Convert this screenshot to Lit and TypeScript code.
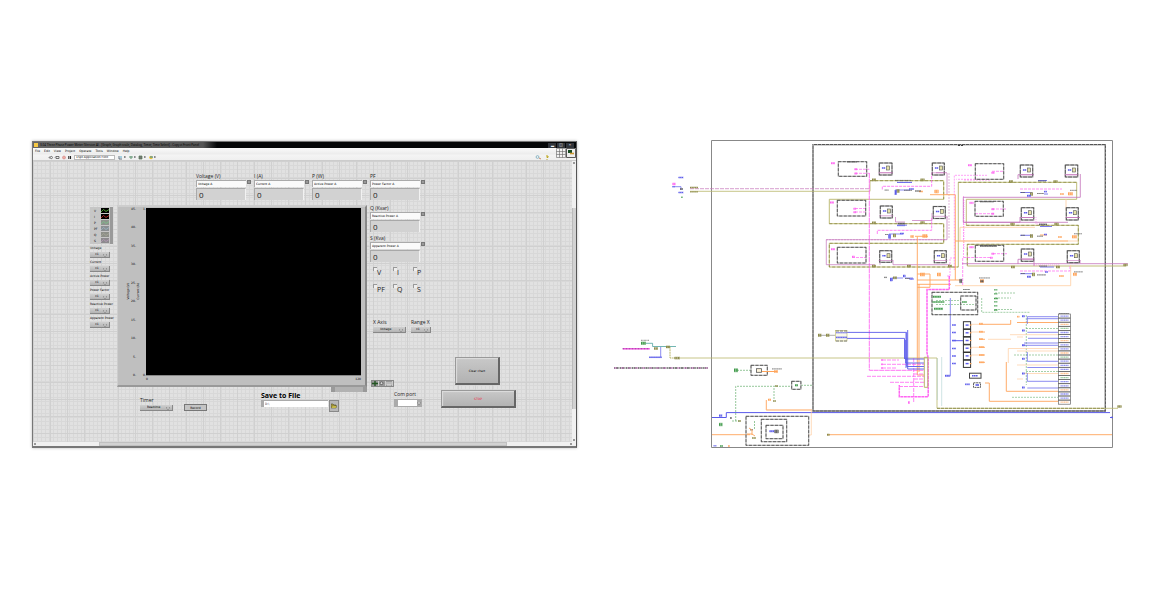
import { LitElement, html, svg, css } from "lit";
import { customElement, property } from "lit/decorators.js";

type Wire = { c: string; p: string; w?: number; d?: string; o?: number };
type Box = [number, number, number, number];

const BLACK = "#3c3c3c";
const OLIVE = "#b9b66a";
const PINK = "#ff66f2";
const PLUM = "#c472ba";
const ORANGE = "#ffa45a";
const PEACH = "#ffcda0";
const BLUE = "#5a5aea";
const GREEN = "#68b070";

const WIRES: Wire[] = [
  // loop borders
  { c: "#888", p: "M711.5 140.5H1112.5V447.5H711.5Z" },
  { c: "#555", p: "M813 144.7H1105.3V411H813Z", w: 1.3 },
  { c: "#ccc", p: "M813 144.7H1105.3V411H813Z", w: 0.8, d: "1 3" },
  { c: BLACK, p: "M958 145.5H964", w: 1.2, d: "2 1" },
  // input wires on the left
  { c: PLUM, p: "M690 188.7H870", w: 0.7, d: "4 1" },
  { c: OLIVE, p: "M690 191.3H870V180.7", w: 0.8 },
  { c: OLIVE, p: "M680 358H937V408.3H1118", w: 0.8 },
  { c: "#77762c", p: "M937 408.3H1105", w: 0.7, d: "3 1" },
  // left bank of measurements
  { c: OLIVE, p: "M870 180.7H943.7V199.3H829.3V223.7H943.7V243.3H829.3V267H958.3V182.3H1076.7V199.3H966.3V225.3H1078.3V244.3H967.3V266H1126", w: 0.9 },
  { c: "#77762c", p: "M870 180.7H943.7V199.3M829.3 223.7H943.7V243.3H829.3V267H958.3M958.3 182.3H1076.7M966.3 225.3H1078.3V244.3H967.3V266", w: 0.6, d: "3 2" },
  { c: PINK, p: "M869.3 173V370.3H924", w: 0.9, d: "5 .6" },
  { c: PINK, p: "M855 169.3H869.3M855 173.3H869.3M855 208.5H866M855 212H866M852 257.5H866", w: 0.7, d: "3 1" },
  { c: PLUM, p: "M947 173V195M947 217V239.7H826.3V264.7H875M880 172.7H893M936 172.7H947M893 260V264.7H950M880 260V264.7M895.5 217V222H905M912 220.5H932V213M945 217H948", w: 0.7 },
  { c: PLUM, p: "M949 173V239M826 239.7H945", w: 0.5, d: "2 1" },
  { c: PINK, p: "M882.3 189.5V186.3H931.7V173M877.3 234V230.3H931.7V218", w: 0.8, d: "3 1" },
  { c: BLUE, p: "M897 182.5H912M897 225.7H905M895 195V190H910M889 238V234H903M892 281V278H903M905 278L913 278", w: 0.7 },
  { c: ORANGE, p: "M930 194.7H955.3V280M917.3 236.5V375H924M919 284V372M928 236.3H915M917 280H960M917 284.3H951M917.3 274H930V287.3H917.3", w: 0.9 },
  // right bank of measurements
  { c: PINK, p: "M987 175.3H954.3V270M987 179.3H956.3M990 180H963M963.5 196V257M955 258H950V276H947", w: 0.6, d: "2 1" },
  { c: PINK, p: "M992 171.3H1004M992 209H1006M975 213.7H994M993 253.7H1007M962.7 285V257.5H991M1020 189H1062M1020 271H1070V265", w: 0.7, d: "3 1" },
  { c: PLUM, p: "M1080.3 174V197.3H963.3V222.3H1020V217M963.3 222.3H1068M1018 179V174.7H1034M1066 174.7H1078M1020 217.5H1034M1066 217.5H1080M1080 260V263.3M1018 264V259.3H1034V266M962 263.7H1128", w: 0.8 },
  { c: PINK, p: "M964 200V250M1036 217V224H1045M1034 265H1060", w: 0.5, d: "1 1" },
  { c: ORANGE, p: "M955 241H1068M1040 235H1047", w: 0.9 },
  { c: PEACH, p: "M1035 227.3H960V241M963.7 243V241M1066 199V210M1070.7 265V285.7H955M1078.3 241H1060", w: 0.8 },
  { c: BLUE, p: "M1020 192.5H1032M1044 194H1048M1020 235.3H1032M1020 273.7H1032M1038 180.5H1047M1040 267H1054M1040 226.5H1052", w: 0.8 },
  // cluster building in the centre
  { c: PINK, p: "M949.3 276V289.5H927V353L928.2 358V396.7H899.3V385", w: 1.5, d: "3 .5" },
  { c: PINK, p: "M882 360H899M882 364.3H924M882 368H897M867 376.3H924M890 382.3H924M899 386.5H924M913.7 358V402M914 374H924M914 379H924", w: 0.8, d: "4 1" },
  { c: BLUE, p: "M846 332.4H906.7V366.5H924M846 338.4H904.5V359M906 333V368M907.7 330V369H924M905 359H924M905.7 340V363H924", w: 0.9 },
  { c: "#888", p: "M819 335.3H835", w: 0.7 },
  { c: OLIVE, p: "M924.3 357.3H927.8V387.3H924.3Z", w: 1 },
  { c: BLUE, p: "M950.3 298V376.3", w: 0.7 },
  { c: "#9fc8c8", p: "M941.7 357V406M937.3 358V400", w: 0.5 },
  // lower wires
  { c: BLUE, p: "M712 417.5H726.3V412.6H1110M952 340.7H963M1110 417.5H1113", w: 1 },
  { c: ORANGE, p: "M712 434.7H750M828 434.7H1112M766.3 400V410H812", w: 0.9 },
  { c: PEACH, p: "M811.3 411V435H808M766 410H812", w: 0.7 },
  { c: GREEN, p: "M737 370.3H751M735.7 421V386.3H791M801 385.3H813M774 388V400M732 421H741M754.5 421V430", w: 0.7, d: "2 1" },
  { c: "#4fa39e", p: "M646 343.3H652.6V346.5H676", w: 0.8 },
  { c: BLUE, p: "M660.7 347V357.3H649M673 186.7H681V190", w: 0.7 },
  { c: OLIVE, p: "M667 347H670V358H675", w: 1, d: "2 .6" },
  { c: PINK, p: "M623 348.8H650", w: 1.4 },
  // graph routing on the right
  { c: GREEN, p: "M981.7 298V312.3H1029.7M1026.3 315V385M936 304.5H975M936 300.5H960M995 293H1015M995 298H1011M995 309.5H1012M1026 328.5H1058M1026 371.5H1058M1012 397.3H1058M1014 355H1058", w: 0.6, d: "2 1" },
  { c: ORANGE, p: "M979 324.3H1010.7V320M979 332H985M979 339.3H985M979 347.3H985M979 355H985M979 362.3H985M1017 322.5H1058M1006.3 362V391.3H1058M985 383H989.3V401.3H1058", w: 0.9 },
  { c: PEACH, p: "M1010 334.7H1058M1008.3 363V348.5H1058M1017 351H1058M1017 365H1058M1017 379H1023M1017 337H1023M988 339.3H1011M1024 373.5H1058M970.7 324.3H979M970.7 332H979M970.7 347.3H979M970.7 355H979", w: 0.7 },
  { c: BLUE, p: "M1027.3 324V316.7H1058M1027.3 318.7H1058M1027.3 332.3H1058M1028 338.3H1058M1023 345.3H1058M1024 343H1058M1027.3 352V361.3H1058M1027.3 373V381.3H1058M1027.3 367.5H1058M1027.3 388H1058", w: 0.7 },
];

const CASES: Box[] = [
  [838.3, 161.7, 28.4, 14.6], [837.3, 200.3, 28.4, 15.7], [837.3, 247.3, 28.7, 15.7],
  [975.3, 163.7, 28.4, 15.6], [975, 201.3, 28.3, 15], [975.3, 245.3, 28.4, 16],
  [932, 292.3, 45.7, 22.4], [960.7, 296, 15.3, 14],
  [746, 416.3, 62.7, 29], [761.3, 419.3, 25.4, 22.4], [766, 425.3, 17, 13.4],
  [751, 365.3, 16.3, 10], [791.7, 381.3, 9.2, 8],
];

const NODES: Box[] = [
  [879.3, 163, 12.7, 12], [932.3, 163, 12, 12], [880.3, 206, 12, 12], [933.3, 206.5, 12, 12],
  [879.7, 250.7, 12, 11.6], [934.3, 250.7, 12, 12], [1020.3, 165, 12.4, 12], [1065.3, 165, 12.4, 12],
  [1021.3, 207.7, 12.4, 12.3], [1066.3, 207.7, 12, 12.3], [1021.3, 249, 12.4, 12.3], [1067.3, 250.7, 12, 12],
];

// small terminals: colour, then x, y, w, h
const TERMS: [string, Box[]][] = [
  ["#8d8b4a", [
    [872, 178.3, 4, 3], [920.5, 178.3, 4, 3], [872, 221.3, 4, 3], [920.5, 221, 4, 3], [872, 264.6, 4, 3], [907, 264.6, 4, 3], [948, 264.6, 4, 3],
    [1009, 180, 4, 3], [1053.5, 180, 4, 3], [1010.5, 222.5, 4, 3], [1054.5, 222.5, 4, 3], [1011, 265.5, 4, 3], [1056, 265.5, 4, 3],
    [1123.5, 263.4, 4, 3], [1117.5, 405, 4, 3], [690, 186.5, 8, 2], [690, 191, 8, 1.6], [666, 345.4, 4, 3], [654, 347, 4, 3], [674.5, 356.6, 5.5, 3],
    [818, 333.5, 3.5, 3.5], [826, 333.5, 3.5, 3.5], [896.5, 189, 3, 4], [893, 233.5, 3, 4], [893, 276.3, 4, 3],
    [1030, 192, 3, 4], [1030, 234, 3, 4], [1032, 272.4, 3, 4], [773, 400, 3, 2], [775, 385, 3, 2], [738, 420, 3, 2], [827, 433.5, 2.5, 2.5], [752, 437, 4, 2],
  ]],
  [PINK, [
    [831, 162, 4, 2.4], [830, 201.3, 4, 2.4], [831, 248, 4, 2.4], [968, 164, 4, 2.4], [969.5, 201.7, 4, 2.4], [969.5, 246, 4, 2.4],
    [854.5, 168, 2.6, 2.4], [854.5, 172.3, 2.6, 2.4], [853.5, 207.5, 2.6, 2.4], [853.5, 211, 2.6, 2.4], [852, 255.5, 2.6, 2.4],
    [991.5, 171.5, 3, 2.4], [991.5, 208, 2.6, 2.4], [991.5, 212.5, 2.6, 2.4], [991.5, 252.5, 2.6, 2.4], [990, 256.6, 2.6, 2.4],
    [881, 359, 2, 2], [881, 363.3, 2, 2], [881, 367, 2, 2], [908, 401, 2, 3], [672.5, 182.5, 3, 3],
  ]],
  [ORANGE, [
    [934.5, 189.5, 4, 4], [919, 190.5, 4, 2], [922.5, 234, 5, 4], [910.5, 235, 3.5, 3], [937, 272.5, 4, 4], [920, 272.5, 5, 4],
    [1068, 192, 5, 3.6], [1060, 193, 4, 2], [1072, 235, 5, 3.6], [1058, 236, 4, 2], [1073, 272.5, 4, 3.6], [1059, 275, 5, 2],
    [980, 279, 4, 4], [979, 322.7, 4, 2], [979, 330.7, 4, 2], [979, 338, 4, 2], [979, 346, 5, 2], [979, 354, 5, 2], [979, 361.3, 5, 2],
    [768, 398.4, 3, 2.6], [774, 370, 4, 3], [728, 445, 2, 2], [1017, 315.7, 2.4, 2],
  ]],
  [BLUE, [
    [678.5, 176.5, 5, 2], [678.5, 191.5, 5, 2], [672, 186, 3, 1.4], [649, 356.5, 13, 1.6], [836, 332, 11, 1.4], [836, 336.4, 11, 2],
    [895, 190, 2, 5], [909, 188, 5, 2], [888.5, 234, 2.4, 5], [900, 232.5, 4, 2], [890, 277.5, 2.4, 4], [903, 274.5, 2.4, 3], [909.5, 278, 4, 2],
    [1027, 194.5, 4, 2.4], [1044, 190.6, 3, 2], [1044, 233.5, 3, 2], [1027, 275.5, 4, 2.4], [1045, 271, 3, 2], [897, 181.8, 15, 1], [897, 224.5, 10, 1.4],
    [952, 324, 4, 2], [952, 331.5, 4, 2], [952, 339.5, 4, 2], [952, 347.5, 4, 2], [952, 355, 4, 2], [952, 362.5, 4, 2], [945, 374.6, 5, 2.4], [965, 383.3, 5, 2],
    [1022, 315, 2.6, 2.4], [1022, 329.3, 2.6, 2.4], [1022, 344, 2.6, 2.4], [1022, 357.6, 2.6, 2.4], [1022, 372.3, 2.6, 2.4], [1022, 386.3, 2.6, 2.4],
    [719, 414.3, 3.4, 2.6], [713.5, 445, 3, 1.6], [1111, 416.6, 2, 1.6], [769.5, 430, 5, 2.4],
  ]],
  ["#3f9a4a", [
    [734, 368.3, 4, 4], [719, 422.7, 3.6, 3.6], [720, 445, 3, 2], [795, 384, 3, 2.6], [681, 196.5, 2, 1.6], [933, 295.5, 8, 2.4], [932.5, 301, 12, 2], [934, 307.5, 9, 2.6],
    [994, 289, 3.5, 1.6], [994, 293, 3.5, 1.6], [994, 297.5, 4, 2], [994, 301, 3.5, 1.6], [994, 305, 3.5, 1.6], [994, 309, 3.5, 2], [962, 301, 5, 2],
    [641, 341.5, 5, 3.4],
  ]],
  ["#555", [
    [847, 161, 10, 1.6], [895, 180, 16, 0.8], [898, 222.6, 7, 2], [884.6, 189.6, 4, 1], [885, 234, 3, 1], [884, 276.7, 3, 1.4], [904, 189.8, 8, 1], [905, 278, 5, 1],
    [1038, 180.5, 8, 1], [1039, 223.4, 8, 2], [1039, 265.6, 8, 1], [1021, 192, 4, 1], [1021, 234.8, 4, 1], [1021, 273, 4, 1], [1037, 193, 7, 1], [1037, 235.7, 6, 1], [1037, 274.4, 9, 1],
    [980, 201, 14, 1.4], [980, 245, 17, 2], [959.5, 278.8, 2.6, 4.4], [980.5, 280, 3, 2.6], [680, 188, 3, 2], [963, 289, 7, 1], [730, 417, 2, 2], [750, 429, 3, 1.5], [774.5, 429.4, 4, 4],
    [1059, 313, 10, 1], [772, 368.5, 10, 0.8], [915, 190.2, 6, 1.6], [979, 277.6, 11, 0.7], [1070, 190, 7, 0.7], [1074, 233.4, 8, 0.7], [1074, 271.5, 9, 0.7],
  ]],
];

const COLUMN = Array.from({ length: 6 }, (_, i) => 321.7 + i * 7.7);
const STACK = Array.from({ length: 22 }, (_, i) => 314 + i * 4.1);
const STACK_INK = [BLUE, BLUE, ORANGE, GREEN, BLUE, BLUE, ORANGE, BLUE, BLUE, ORANGE, GREEN, BLUE];

@customElement("block-diagram")
export class BlockDiagram extends LitElement {
  static styles = css`
    :host { display: block; min-width: 0; }
    svg { display: block; width: 100%; height: auto; }
  `;
  render() {
    return html`<svg viewBox="614 140 514 308" role="img" aria-label="Block diagram" fill="none">
      ${WIRES.map((l) => svg`<path d=${l.p} stroke=${l.c} stroke-width=${l.w ?? 1} stroke-dasharray=${l.d ?? "none"} />`)}
      ${CASES.map(([x, y, w, h]) => svg`
        <rect x=${x} y=${y} width=${w} height=${h} stroke="#aaa" stroke-width="1" />
        <rect x=${x} y=${y} width=${w} height=${h} stroke="#333" stroke-width=".7" stroke-dasharray="3 1.5" />`)}
      ${NODES.map(([x, y, w, h]) => svg`
        <rect x=${x} y=${y} width=${w} height=${h} stroke="#aaa" stroke-width="1.3" />
        <rect x=${x} y=${y} width=${w} height=${h} stroke="#333" stroke-width=".7" stroke-dasharray="4 1" />
        <path d="M${x + 2.6} ${y + 5}h3.6" stroke=${BLUE} stroke-width="1.6" stroke-dasharray="1.4 .3" />
        <rect x=${x + 7.3} y=${y + 3} width="3" height="4" fill="#e6e2a8" stroke="#555" stroke-width=".6" />
        <path d="M${x - 1} ${y + 9.8}h${w + 2}" stroke=${PLUM} stroke-width=".6" />`)}
      <rect x="835.5" y="330.5" width="11.5" height="10.5" fill="#fbfae8" stroke=${OLIVE} stroke-width=".6" />
      <path d="M836 331h11M836 341h11" stroke="#666" stroke-width=".8" stroke-dasharray="3 1" />
      ${TERMS.map(([c, list]) => list.map(([x, y, w, h]) => svg`
        <path d="M${x} ${y + h / 2}h${w}" stroke=${c} stroke-width=${h} opacity=".45" />
        <path d="M${x} ${y + h / 2}h${w}" stroke=${c} stroke-width=${Math.max(h - 1, 0.5)} stroke-dasharray="1.1 .6" />`))}
      ${COLUMN.map((y) => svg`
        <rect x="963.4" y=${y} width="7.2" height="7.2" stroke="#333" stroke-width="1" />
        <path d=${`M965.6 ${y + 3.4}h3`} stroke=${BLUE} stroke-width="1.4" />
        <path d=${`M969.8 ${y + 3.4}h1.6`} stroke=${ORANGE} stroke-width="1.2" />`)}
      ${STACK.map((y, i) => svg`
        <rect x="1058.5" y=${y} width="12" height="4.1" stroke="#666" stroke-width=".7" />
        <path d=${`M1060.5 ${y + 2.1}h8`} stroke=${STACK_INK[i % 12]} stroke-width="1.3" stroke-dasharray="1.3 .4" opacity=".7" />`)}
      <rect x="969.5" y="373.2" width="11.5" height="5" stroke="#444" stroke-width="1" />
      <path d="M972 375.8h6" stroke=${BLUE} stroke-width="1.6" stroke-dasharray="1.4 .4" />
      <rect x="973.5" y="382.8" width="7" height="4.6" stroke="#333" stroke-width=".8" stroke-dasharray="2 .6" />
      <path d="M975.5 385h3.5" stroke=${BLUE} stroke-width="1.6" />
      <path d="M749 428l3 2v5M747 434h5l3 2" stroke=${ORANGE} stroke-width=".9" />
      <rect x="756.5" y="368.7" width="5" height="3.6" fill="#fff6dd" stroke="#555" stroke-width=".8" />
      <path d="M762 371.5h15" stroke=${ORANGE} />
      <path d="M614 368h94" stroke="#555" stroke-width="1.6" stroke-dasharray="1.4 .5 2.2 .4 .8 .6" />
      <path d="M614 368h94" stroke=${PINK} stroke-width=".5" stroke-dasharray="3 4" />
      <path d="M622.5 348.8h27" stroke="#a0309a" stroke-width="1" stroke-dasharray="2 1" />
      <path d="M641 340.3h8" stroke="#555" stroke-width=".7" stroke-dasharray="1 .4" />
    </svg>`;
  }
}

@customElement("numeric-meter")
export class NumericMeter extends LitElement {
  @property() caption = "";
  @property() source = "";
  static styles = css`
    :host { display: block; font-family: "Open Sans", "Noto Sans", sans-serif; color: #222; }
    .caption { display: block; font-size: 5px; line-height: 7px; height: 7px; white-space: nowrap; }
    .row { display: flex; gap: 1px; align-items: flex-start; }
    .source { width: 50px; height: 7px; box-sizing: border-box; border: 0 solid #aaa; border-top-width: 1px; border-left-width: 1px; background: #fafafa; padding: 0 1px; margin: 0; font: 3px/6px "DejaVu Sans", sans-serif; color: #000; appearance: none; border-radius: 0; outline: none; }
    .spin { width: 4px; height: 4px; padding: 0; border: 1px solid #777; background: #999; box-sizing: border-box; }
    .value { display: block; width: 50px; height: 12px; box-sizing: border-box; padding: 1px 2px; font-size: 8px; line-height: 10px; color: #222; background: #d2d2d2; border-top: 1px solid #a8a8a8; border-left: 1px solid #aaa; border-right: 1px solid #f2f2f2; margin-top: 1px; }
  `;
  render() {
    return html`<label class="caption" for="src">${this.caption}</label>
      <div class="row"><select class="source" id="src"><option>${this.source}</option></select><button class="spin" aria-label="Next ${this.caption}"></button></div>
      <output class="value" for="src">0</output>`;
  }
}

const MENUS = ["File", "Edit", "View", "Project", "Operate", "Tools", "Window", "Help"];
const TRACES: [string, string, string][] = [
  ["V", "#000", "#6d4"], ["I", "#000", "#e33"], ["P", "#8d938d", "#7c8"],
  ["PF", "#8b8f92", "#9bc"], ["Q", "#8c8f88", "#aa9"], ["S", "#8c8a8e", "#b9b"],
];
const SCALES = ["Voltage", "Current", "Active Power", "Power Factor", "Reactive Power", "Apparent Power"];
const TICKS = [45, 40, 35, 30, 25, 20, 15, 10, 5, 0];

@customElement("app-root")
export class AppRoot extends LitElement {
  static styles = css`
    :host { display: block; min-height: 100vh; box-sizing: border-box; background: #fff; padding: 140px 39px 0 32px; font-family: "Open Sans", "Noto Sans", sans-serif; color: #222; }
    .page { display: grid; grid-template-columns: 545fr 514fr; gap: 37px; align-items: start; }
    .window { margin-top: 1px; border: 1px solid #777; border-right-color: #555; border-bottom: 2px solid #777; box-shadow: 0 0 3px #bbb; box-sizing: border-box; background: #e9e9e9; min-width: 0; }
    .title { display: flex; align-items: center; height: 6px; background: linear-gradient(90deg, #666 0, #555 170px, #050708 184px, #050708); font-size: 3px; line-height: 6px; white-space: nowrap; }
    .logo { width: 4px; height: 4px; margin: 0 2px 0 1px; background: #f6c945; }
    .name { flex: 1; font: normal 3px/6px "Noto Sans", sans-serif; margin: 0; color: #000; }
    .winbtn { display: flex; gap: 1px; padding-right: 2px; }
    .winbtn button { width: 8px; height: 5px; border: 0; background: #30343a; color: #eee; font-size: 4px; line-height: 4px; padding: 0; }
    .chrome { display: flex; height: 13px; background: linear-gradient(#fbfbfb, #ececec 6px, #f4f4f4 7px, #efefef); border-bottom: 1px solid #ccc; box-sizing: border-box; }
    .bars { flex: 1; }
    .menu { display: flex; gap: 4px; padding-left: 2px; height: 6px; font: 3px/6px "DejaVu Sans", sans-serif; }
    .menu a { color: #000; text-decoration: none; }
    .tools { display: flex; align-items: center; height: 6px; padding: 0 6px 0 15px; gap: 2px; }
    .tools svg { height: 5px; display: block; }
    .tools select { width: 41px; height: 5px; border: 1px solid #bbb; background: #fff; font: 3px/3px "DejaVu Sans", sans-serif; padding: 0 1px; appearance: none; color: #000; box-sizing: border-box; }
    .push { flex: 1; }
    .conn { width: 20px; height: 10px; display: block; }
    .main { display: grid; grid-template-columns: 1fr 4px; }
    .canvas { box-sizing: border-box; height: 281px; background-color: #e1e1e1; background-image: linear-gradient(#d0d0d0 1px, transparent 1px), linear-gradient(90deg, #d0d0d0 1px, transparent 1px), linear-gradient(#d8d8d8 1px, transparent 1px), linear-gradient(90deg, #d8d8d8 1px, transparent 1px); background-size: 17px 17px, 17px 17px, 4px 4px, 4px 4px; }
    .meters { display: flex; gap: 3px; padding: 12px 0 0 163px; height: 44px; box-sizing: border-box; }
    .body { display: flex; padding-left: 57px; gap: 3px; }
    .upper { display: flex; }
    .side { width: 27px; display: flex; flex-direction: column; font-family: "DejaVu Sans", sans-serif; font-size: 3px; color: #000; }
    .legend { width: 23px; height: 37px; margin-top: 2px; background: #c6c6c6; border-right: 3px solid #999; box-sizing: border-box; padding-top: 1px; margin-bottom: 2px; }
    .trace { display: flex; justify-content: space-between; padding: 0 1px 0 4px; height: 6px; line-height: 6px; }
    .trace svg { width: 8px; height: 5px; }
    .scale { display: flex; flex-direction: column; height: 14px; line-height: 5px; white-space: nowrap; }
    .scale span { padding-left: 0; }
    .ring { font: 3px/5px "DejaVu Sans", sans-serif; height: 6px; border: 1px solid #888; border-width: 0 1px 1px 0; background: linear-gradient(#cfcfcf, #b4b4b4); color: #000; padding: 0 0 0 5px; appearance: none; width: 20px; margin: 0; box-sizing: border-box; border-radius: 0; }
    .ringbox { display: grid; width: max-content; margin-top: 1px; align-items: center; }
    .ringbox > * { grid-area: 1 / 1; }
    .ringbox svg { width: 4px; height: 3px; justify-self: end; margin-right: 3px; pointer-events: none; }
    .chart { width: 250px; height: 182px; box-sizing: border-box; background: #bfbfbf; border: 1px solid #cdcdcd; border-width: 2px 2px 2px 1px; border-right-color: #888; border-bottom-color: #999; display: grid; grid-template-columns: 4px 6px 5px 5px 1fr; padding: 1px 4px 0 8px; grid-template-rows: 167px 10px; font-family: "DejaVu Sans", sans-serif; font-size: 3px; line-height: 3px; color: #000; }
    .axis { writing-mode: vertical-rl; transform: rotate(180deg); justify-self: center; align-self: center; white-space: nowrap; }
    .ticks { display: flex; flex-direction: column; justify-content: space-between; text-align: right; margin-bottom: -2px; }
    .plot { background: #000; grid-column: 5; }
    .xaxis { grid-column: 5; display: flex; justify-content: space-between; border-top: 1px solid #888; padding-top: 2px; }
    .hbar { display: flex; justify-content: space-between; width: 36px; height: 5px; margin-left: auto; background: #b2b2b2; border: 1px solid #999; border-width: 0 4px; box-sizing: border-box; }
    .bottom { display: flex; padding-left: 50px; align-items: flex-start; }
    .field { display: flex; flex-direction: column; font-size: 5px; line-height: 7px; white-space: nowrap; }
    .timer { width: 44px; padding-top: 5px; }
    .reset { width: 23px; height: 7px; margin: 12px 0 0; padding: 0; border: 1px solid #777; background: #c4c4c4; font: 3px/4px "DejaVu Sans", sans-serif; color: #000; }
    .save { margin-left: 54px; font-size: 7px; font-weight: 700; line-height: 8px; color: #000; }
    .path { display: flex; gap: 1px; }
    .path input { width: 67px; height: 7px; box-sizing: border-box; border: 1px solid #aaa; border-width: 1px 0 0 3px; background: #fff; padding: 0 1px; font: 3px/5px "DejaVu Sans", sans-serif; color: #333; }
    .path button { width: 10px; height: 12px; padding: 1px; border: 1px solid #888; background: #b8b8b8; }
    .path svg { display: block; width: 6px; height: 6px; }
    .mid { width: 68px; display: flex; flex-direction: column; }
    .mid numeric-meter { height: 30px; }
    .checks { display: grid; grid-template-columns: repeat(3, 20px); grid-template-rows: 17px 14px; padding: 1px 0 0 3px; }
    .check { display: flex; font-size: 7px; line-height: 10px; color: #222; padding-top: 1px; }
    .check input { appearance: none; width: 4px; height: 4px; margin: 0; background: #eee; border: 1px solid #999; border-width: 1px 0 0 1px; }
    .check span { padding-top: 1px; }
    .axes { display: flex; gap: 5px; padding: 22px 0 0 3px; }
    .wide .ring { width: 33px; padding-left: 7px; }
    .palette { display: flex; width: 23px; height: 7px; margin: 47px 0 4px 1px; background: #aaa; box-sizing: border-box; border: 1px solid #888; }
    .palette button { flex: 1; border: 0; padding: 0; background: #999; border-right: 1px solid #ccc; }
    .palette svg { width: 6px; height: 5px; display: block; }
    .com { margin-left: 24px; }
    .com .ring { width: 28px; height: 8px; background: #fff; border: 1px solid #aaa; border-width: 1px 5px 1px 4px; }
    .com svg { margin-right: 1px; }
    .acts { width: 75px; padding-top: 152px; display: flex; flex-direction: column; gap: 5px; }
    .acts button { font: 3px/4px "DejaVu Sans", sans-serif; padding: 0; border: 1px solid #999; border-width: 1px 2px 2px 1px; border-right-color: #666; border-bottom-color: #666; background: linear-gradient(#c8c8c8, #b2b2b2); box-shadow: inset 1px 1px 1px #ddd; color: #000; }
    .clear { width: 45px; height: 28px; margin-left: 14px; }
    .acts .stop { width: 75px; height: 18px; color: #f02040; }
    .vscroll { background: #f0f0f0; display: flex; flex-direction: column; justify-content: space-between; align-items: center; }
    .thumb { width: 4px; height: 201px; margin-top: 13px; background: #d2d2d2; border-left: 1px solid #bbb; box-sizing: border-box; }
    .arrow { width: 2px; height: 2px; background: #999; margin: 1px 0; }
    .hscroll { height: 4px; display: flex; align-items: center; justify-content: space-between; background: #f0f0f0; padding: 0 4px 0 1px; }
    .hthumb { width: 76%; height: 4px; background: #d2d2d2; border: 1px solid #c0c0c0; box-sizing: border-box; }
  `;

  private ring(value: string, label: string) {
    return html`<span class="ringbox"><select class="ring" aria-label=${label}><option>${value}</option></select>
      <svg viewBox="0 0 4 3"><path d="M0 0H4L2 3Z" fill="#ddd" stroke="#777" stroke-width=".6" /></svg></span>`;
  }

  render() {
    return html`<main class="page">
      <section class="window" aria-label="Front panel">
        <header class="title"><span class="logo"></span>
          <h1 class="name">3.04 Three Phase Power Meter (Version A) - [Graph, Graph scale, Datalog, Timer, Time Select] - Copy.vi Front Panel</h1>
          <div class="winbtn"><button aria-label="Minimize">▂</button><button aria-label="Restore">◫</button><button aria-label="Close">×</button></div>
        </header>
        <div class="chrome">
          <div class="bars">
            <nav class="menu">${MENUS.map((m) => html`<a href="#">${m}</a>`)}</nav>
            <div class="tools">
              <svg viewBox="0 0 24 5" fill="none"><path d="M1 2h2V1l2 1.5L3 4V3H1z" stroke="#555" stroke-width=".6" /><path d="M8 1.5h3v2H8zM7 2.5l1-1" stroke="#555" stroke-width=".8" /><circle cx="16" cy="2.5" r="1.5" fill="#f0a9a0" stroke="#c88" stroke-width=".6" /><path d="M20.8 1v3M22.5 1v3" stroke="#222" stroke-width="1.1" /></svg>
              <select aria-label="Text settings"><option>15pt Application Font</option></select>
              <svg viewBox="0 0 40 5" fill="none"><path d="M2 1v3h3" stroke="#567" stroke-width=".9" /><path d="M3 2h2" stroke="#5ac" /><path d="M7 2h1.6M17 2h1.6M27 2h1.6M37 2h1.6" stroke="#222" /><path d="M12 2h4M14 1v3" stroke="#697" stroke-width="1.1" /><path d="M22 1h3v3h-3z" fill="#777" stroke="#575" stroke-width=".7" /><circle cx="34" cy="2.5" r="1.8" fill="#ecc43a" /><path d="M33 2h3" stroke="#38a" /></svg>
              <span class="push"></span>
              <svg viewBox="0 0 16 5" fill="none"><circle cx="3.5" cy="2" r="1.4" stroke="#7ab" stroke-width=".8" /><path d="M5 3l2 1" stroke="#c86" /><path d="M12 1h2v1.4h-1V3M13 4v.8" stroke="#b9a210" stroke-width="1" /></svg>
            </div>
          </div>
          <svg class="conn" viewBox="0 0 20 10" fill="none"><path d="M.5.5H9.5V9.5H.5ZM3.5.5V9.5M6.5.5V9.5M.5 3.5H9.5M.5 6.5H9.5" stroke="#666" stroke-width=".6" /><path d="M10.5.5H19.5V9.5H10.5Z" fill="#eee" stroke="#333" stroke-width=".8" /><path d="M12 2h4v3h-4z" fill="#164a20" /><path d="M14 5.5h4" stroke="#c93" stroke-width="1.6" /></svg>
        </div>
        <div class="main">
          <div class="canvas">
            <div class="meters">
              <numeric-meter caption="Voltage (V)" source="Voltage A"></numeric-meter>
              <numeric-meter caption="I (A)" source="Current A"></numeric-meter>
              <numeric-meter caption="P (W)" source="Active Power A"></numeric-meter>
              <numeric-meter caption="PF" source="Power Factor A"></numeric-meter>
            </div>
            <div class="body">
              <div>
                <div class="upper">
                  <div class="side">
                    <div class="legend">${TRACES.map(([n, bg, c]) => html`<div class="trace"><span>${n}</span><svg viewBox="0 0 8 5"><rect width="8" height="5" fill=${bg} /><path d="M0 4L2.5 1.5L5 3.5L8 1.5" fill="none" stroke=${c} stroke-width=".7" /></svg></div>`)}</div>
                    ${SCALES.map((s) => html`<div class="scale"><span>${s}</span>${this.ring("x1", s)}</div>`)}
                  </div>
                  <div class="chart">
                    <span class="axis">Voltage (V)</span>
                    <div class="ticks">${TICKS.map((t) => html`<span>${t}-</span>`)}</div>
                    <span class="axis">Current (A)</span>
                    <div class="ticks"><span>1-</span><span>0-</span></div>
                    <div class="plot" role="img" aria-label="Waveform chart"></div>
                    <div class="xaxis"><span>0</span><span>120</span></div>
                  </div>
                </div>
                <div class="hbar"></div>
                <div class="bottom">
                  <label class="field timer">Timer<span class="wide">${this.ring("Realtime", "Timer")}</span></label>
                  <button class="reset">Record</button>
                  <div class="field save"><label for="path">Save to File</label>
                    <div class="path"><input id="path" value="D:\\" /><button aria-label="Browse"><svg viewBox="0 0 6 6"><path d="M0 5V1h2l1 1h2v1" fill="#b5a53a" stroke="#443" stroke-width=".6" /><path d="M0 5l1-2h5L5 5z" fill="#f0de50" stroke="#443" stroke-width=".5" /></svg></button></div>
                  </div>
                </div>
              </div>
              <div class="mid">
                <numeric-meter caption="Q (Kvar)" source="Reactive Power A"></numeric-meter>
                <numeric-meter caption="S (Kva)" source="Apparent Power A"></numeric-meter>
                <div class="checks">${["V", "I", "P", "PF", "Q", "S"].map((c) => html`<label class="check"><input type="checkbox" /><span>${c}</span></label>`)}</div>
                <div class="axes">
                  <label class="field wide">X Axis${this.ring("Voltage", "X Axis")}</label>
                  <label class="field">Range X${this.ring("x1", "Range X")}</label>
                </div>
                <div class="palette">
                  <button aria-label="Cursor"><svg viewBox="0 0 6 5"><path d="M0 2.5H6M3 0V5" stroke="#252" stroke-width="1.4" /></svg></button>
                  <button aria-label="Zoom"><svg viewBox="0 0 6 5"><circle cx="2.5" cy="2.2" r="1.4" fill="#ddd" stroke="#333" stroke-width=".6" /></svg></button>
                  <button aria-label="Pan"><svg viewBox="0 0 6 5"><path d="M1 4V1M3 4V1M5 4V1M1 4H5" fill="none" stroke="#eee" stroke-width=".8" /></svg></button>
                </div>
                <label class="field com">Com port${this.ring("", "Com port")}</label>
              </div>
              <div class="acts"><button class="clear">Clear chart</button><button class="stop">STOP</button></div>
            </div>
          </div>
          <div class="vscroll"><span class="arrow"></span><span class="thumb"></span><span class="arrow"></span></div>
        </div>
        <div class="hscroll"><span class="arrow"></span><span class="hthumb"></span><span class="arrow"></span></div>
      </section>
      <block-diagram></block-diagram>
    </main>`;
  }
}
